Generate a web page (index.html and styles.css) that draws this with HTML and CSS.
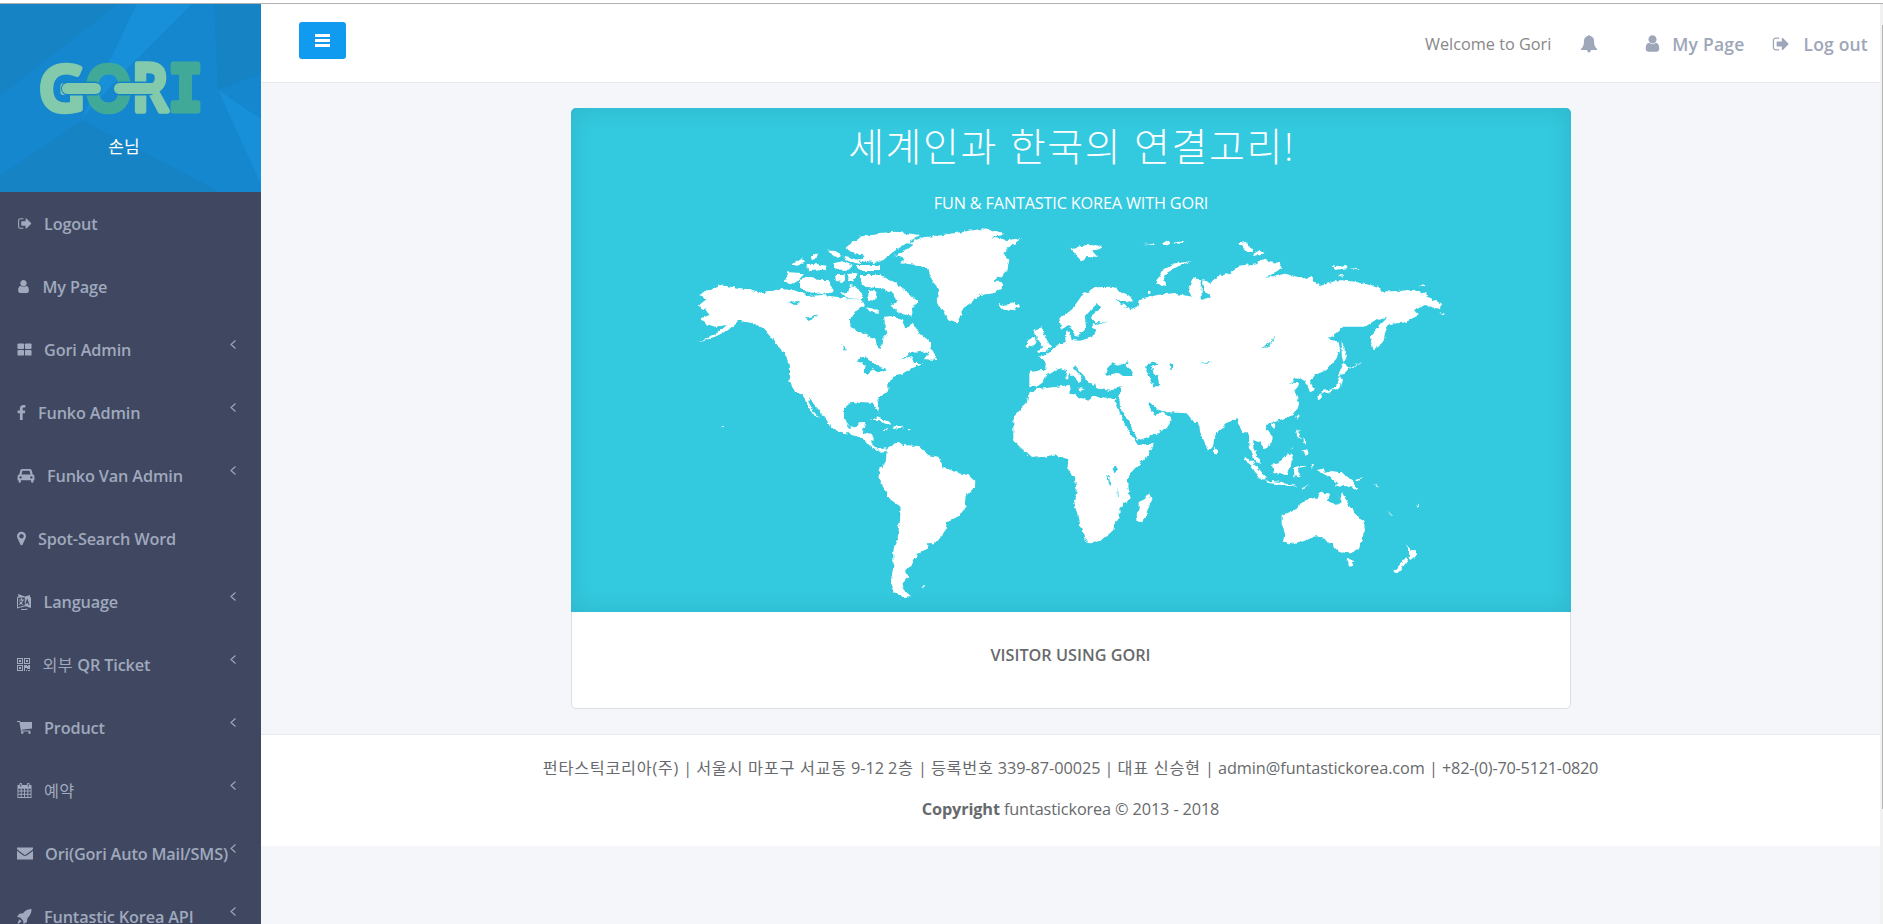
FILE: index.html
```html
<!DOCTYPE html>
<html lang="ko">
<head>
<meta charset="utf-8">
<title>GORI</title>
<link rel="stylesheet" href="styles.css">
</head>
<body>
<svg class="defs" width="0" height="0">
  <symbol id="signout" viewBox="0 0 1664 1792"><path d="M704 1440q0 4 1 20t.5 26.500-3 23.500-10 19.500-20.500 6.500h-320q-119 0-203.500-84.500t-84.500-203.500v-704q0-119 84.500-203.500t203.500-84.500h320q13 0 22.500 9.500t9.500 22.500q0 4 1 20t.5 26.500-3 23.500-10 19.500-20.500 6.500h-320q-66 0-113 47t-47 113v704q0 66 47 113t113 47h312l23 4 15 14 2 14zM1632 896q0 26-19 45l-544 544q-19 19-45 19t-45-19-19-45v-288h-448q-26 0-45-19t-19-45v-384q0-26 19-45t45-19h448v-288q0-26 19-45t45-19 45 19l544 544q19 19 19 45z"/></symbol>
  <symbol id="user" viewBox="256 0 1280 1792"><path d="M1536 1399q0 109-62.500 187t-150.500 78h-854q-88 0-150.500-78t-62.500-187q0-85 8.500-160.500t31.500-152 58.500-131 94-89 134.500-34.500q131 128 313 128t313-128q76 0 134.500 34.500t94 89 58.500 131 31.500 152 8.500 160.500zM1280 512q0 159-112.500 271.500t-271.500 112.500-271.500-112.500-112.500-271.500 112.500-271.500 271.500-112.500 271.500 112.500 112.500 271.500z"/></symbol>
  <symbol id="large" viewBox="0 0 15 16"><rect x="0" y="1.500" width="7" height="6" rx="1"/><rect x="8" y="1.500" width="7" height="6" rx="1"/><rect x="0" y="8.500" width="7" height="6" rx="1"/><rect x="8" y="8.500" width="7" height="6" rx="1"/></symbol>
  <symbol id="facebook" viewBox="479 0 864 1664"><path d="M1343 12v264h-157q-86 0-116 36t-30 108v189h293l-39 296h-254v759h-306v-759h-255v-296h255v-218q0-186 104-288.500t277-102.500q147 0 228 12z"/></symbol>
  <symbol id="car" viewBox="0 0 18 16"><path fill-rule="evenodd" d="M5 1h8q1.500 0 2 1.500L16.200 7Q18 7.200 18 9v4h-1v1.300q0 1.500-1.300 1.500T14.400 14.300V13H3.600v1.300q0 1.500-1.300 1.500T1 14.300V13H0V9q0-1.800 1.800-2L3 2.500Q3.500 1 5 1zM5.200 3 4.200 7h9.600l-1-4zM3.300 8.700a1.300 1.300 0 1 0 .01 0zM14.700 8.700a1.300 1.300 0 1 0 .01 0z"/></symbol>
  <symbol id="marker" viewBox="384 128 1024 1536"><path fill-rule="evenodd" d="M1152 640q0-106-75-181t-181-75-181 75-75 181 75 181 181 75 181-75 75-181zM1408 640q0 109-33 179l-364 774q-16 33-47.500 52t-67.500 19-67.500-19-46.500-52l-365-774q-33-70-33-179 0-212 150-362t362-150 362 150 150 362z"/></symbol>
  <symbol id="language" viewBox="0 0 14 16"><path fill-rule="evenodd" d="M1 0l7 2.500L13 1v2l1 .5V14l-5.500-1.700L0 14.500V3l1.500-.5zM1 3.800v9.400l6.800-2V3.500zM4 4h1v1.500h2v1H6q-.3 1.600-1.200 2.700l1.400 1-.6.8-1.600-1.100-1.800 1.100-.6-.8 1.600-1q-.8-.9-1-1.800h1l.8 1.100q.6-.8.8-2H1.700v-1H4zM10.500 5l2 6-1-.3-.4-1.300-1.500-.4-.4 1.200-.8-.3 1.500-5zM4 15h5l1-1 .5 1.500-1.500.5H4z"/></symbol>
  <symbol id="qr" viewBox="0 0 13 13"><path fill-rule="evenodd" d="M0 0h6v6H0zM1 1v4h4V1zM2 2h2v2H2zM7 0h6v6H7zM8 1v4h4V1zM9 2h2v2H9zM0 7h6v6H0zM1 8v4h4V8zM2 9h2v2H2zM7 7h3v1h1V7h2v4h-3v-1H8v3H7zM9 12h1v1H9zM11 12h2v1h-2z"/></symbol>
  <symbol id="cart" viewBox="0 0 15 13"><path d="M0 0h3l.5 1H15v6.500L4.700 8.700 5 9.500h8.500v1H4L2.400 1H0zM5.300 10.500a1.200 1.200 0 1 1-.01 0zM12.500 10.500a1.200 1.200 0 1 1-.01 0z"/></symbol>
  <symbol id="calendar" viewBox="0 0 15 16"><path fill-rule="evenodd" d="M0 2h2V1q0-1 1.500-1T5 1v1h5V1q0-1 1.500-1T13 1v1h2v14H0zM1 6v2h2.500V6zM4.500 6v2H7V6zM8 6v2h2.500V6zM11.500 6v2H14V6zM1 9v2.500h2.500V9zM4.500 9v2.500H7V9zM8 9v2.500h2.500V9zM11.500 9v2.500H14V9zM1 12.500V15h2.500v-2.500zM4.500 12.500V15H7v-2.500zM8 12.500V15h2.500v-2.500zM11.500 12.500V15H14v-2.500zM3 1v3h1V1zM11 1v3h1V1z"/></symbol>
  <symbol id="mail" viewBox="0 0 16 12"><path d="M0 0h16v1.500Q15 3 8 7.700 1 3 0 1.500zM0 3.300Q3 5.800 6 7.800q2 1.300 4 0 3-2 6-4.500V12H0z"/></symbol>
  <symbol id="rocket" viewBox="0 0 16 16"><path d="M15.500 0Q15.500 6 11 10l-.5 4-3.500 2-.5-3.500L3.500 9 0 8.500 2.500 5l4-.5Q10 0 15.500 0zM2.500 11l2.500 2-3 2.500H.5z"/></symbol>
  <symbol id="bell" viewBox="0 0 16 18"><path d="M7 1a1 1 0 0 1 2 0q4 .8 4 5 0 5.500 3 8v1H10a2 2 0 0 1-4 0H0v-1q3-2.500 3-8 0-4.200 4-5zM6 15.500h4L8 18z"/></symbol>
  <symbol id="left" viewBox="0 0 6 9"><path d="M5.500.5 1 4.500l4.500 4" fill="none" stroke="currentColor" stroke-width="1.100"/></symbol>
</svg>

<div class="page">
  <aside class="sidebar">
    <div class="profile">
      <svg class="facets" viewBox="0 0 261 188" preserveAspectRatio="none">
        <path fill="#1683c4" d="M0 0h118L0 92zM82 116 220 188H0v-16zM214 0h47v70l-43 16z"/>
        <path fill="#1890d9" d="M137 0h55L126 66 82 114zM218 86l43 29v65z"/>
      </svg>
      <svg class="logo" viewBox="38 59 166 58" role="img" aria-label="GORI">
        <g font-family="Open Sans" font-weight="600" stroke-linejoin="round">
          <text x="39" y="111" font-size="64" textLength="46" lengthAdjust="spacingAndGlyphs" fill="#82caab" stroke="#82caab" stroke-width="5.500">G</text>
          <text x="85" y="111" font-size="64" textLength="47" lengthAdjust="spacingAndGlyphs" fill="#40a998" stroke="#40a998" stroke-width="5.500">O</text>
          <text x="132" y="111" font-size="65" textLength="36" lengthAdjust="spacingAndGlyphs" fill="#82caab" stroke="#82caab" stroke-width="5.500">R</text>
          <text x="168" y="111" font-size="64" textLength="35" lengthAdjust="spacingAndGlyphs" font-family="DejaVu Sans Mono" font-weight="700" fill="#40a998" stroke="#40a998" stroke-width="5">I</text>
        </g>
        <rect x="61" y="81.500" width="41" height="14" rx="7" fill="#1585ca"/>
        <rect x="62" y="83" width="39" height="11" rx="5.500" fill="#82caab"/>
        <rect x="113" y="81.500" width="43" height="14" rx="7" fill="#1585ca"/>
        <rect x="114" y="83" width="46" height="11" rx="5.500" fill="#82caab"/>
      </svg>
      <div class="guest">손님</div>
    </div>
    <nav class="menu">
      <a><svg class="i15"><use href="#signout"/></svg><span>Logout</span></a>
      <a><svg class="i13"><use href="#user"/></svg><span>My Page</span></a>
      <a><svg class="i15"><use href="#large"/></svg><span>Gori Admin</span><svg class="arrow"><use href="#left"/></svg></a>
      <a><svg class="i9"><use href="#facebook"/></svg><span>Funko Admin</span><svg class="arrow"><use href="#left"/></svg></a>
      <a><svg class="i18"><use href="#car"/></svg><span>Funko Van Admin</span><svg class="arrow"><use href="#left"/></svg></a>
      <a><svg class="i9"><use href="#marker"/></svg><span>Spot-Search Word</span></a>
      <a><svg class="i14"><use href="#language"/></svg><span>Language</span><svg class="arrow"><use href="#left"/></svg></a>
      <a><svg class="i13 low"><use href="#qr"/></svg><span><span class="ko">외부</span> QR Ticket</span><svg class="arrow"><use href="#left"/></svg></a>
      <a><svg class="i15 low"><use href="#cart"/></svg><span>Product</span><svg class="arrow"><use href="#left"/></svg></a>
      <a><svg class="i15"><use href="#calendar"/></svg><span class="ko">예약</span><svg class="arrow"><use href="#left"/></svg></a>
      <a><svg class="i16 low"><use href="#mail"/></svg><span class="long">Ori(Gori Auto Mail/SMS)</span><svg class="arrow"><use href="#left"/></svg></a>
      <a><svg class="i15"><use href="#rocket"/></svg><span>Funtastic Korea API</span><svg class="arrow"><use href="#left"/></svg></a>
    </nav>
  </aside>

  <main class="content">
    <header class="topbar">
      <button class="toggle" aria-label="menu"><svg viewBox="0 0 15 13"><path d="M0 0h15v3H0zM0 5h15v3H0zM0 10h15v3H0z"/></svg></button>
      <div class="links">
        <span class="welcome">Welcome to Gori</span>
        <svg class="bell"><use href="#bell"/></svg>
        <svg class="me"><use href="#user"/></svg><span class="mypage">My Page</span>
        <svg class="out"><use href="#signout"/></svg><span class="logout">Log out</span>
      </div>
    </header>

    <section class="card">
      <div class="hero">
        <h1>세계인과 한국의 연결고리!</h1>
        <p>FUN &amp; FANTASTIC KOREA WITH GORI</p>
        <svg class="map" viewBox="571 220 1000 391">
          <defs><filter id="coast" x="0" y="0" width="1" height="1" color-interpolation-filters="sRGB"><feTurbulence type="fractalNoise" baseFrequency=".22" numOctaves="2" seed="4"/><feDisplacementMap in="SourceGraphic" scale="4.500" xChannelSelector="R" yChannelSelector="G"/></filter></defs>
          <g fill="#fff" filter="url(#coast)">
            <rect x="571" y="220" width="1000" height="391" fill="none"/>
            <!-- North America, Greenland, Iceland, Britain -->
            <g transform="translate(560 100) scale(.33333)">
              <path d="M418 585L445 570 480 555 520 562 570 568 610 580 660 566 710 572 745 588 790 585 860 595 900 600 915 615 890 632 870 660 872 685 905 700 945 715 952 740 962 747 968 715 982 700 975 675 972 650 1000 648 1025 660 1035 682 1050 680 1058 668 1075 695 1110 725 1112 745 1132 780 1095 778 1108 755 1085 755 1050 760 1020 780 1055 768 1062 788 1090 790 1050 808 1020 825 1000 830 985 850 985 870 952 900 960 938 945 925 940 908 900 906 870 910 852 925 852 960 870 983 890 980 897 967 916 966 908 1000 938 1005 937 1035 955 1048 975 1045 980 1053 960 1055 930 1038 915 1020 890 1012 870 1000 850 1000 810 980 800 960 775 928 748 896 745 905 762 935 777 953 760 945 745 920 728 885 705 875 688 840 686 780 660 745 635 715 610 685 580 670 535 662 505 690 470 708 415 730 465 700 490 685 500 675 465 680 440 672 425 655 448 645 440 630 415 618 430 605 440 598z"/>
              <path d="M1005 465L1040 450 1060 435 1040 430 1090 412 1150 405 1210 395 1260 387 1310 392 1330 405 1290 412 1340 420 1385 415 1350 440 1330 460 1348 480 1342 510 1320 530 1300 545 1328 545 1325 565 1300 580 1260 585 1230 610 1210 625 1192 668 1165 658 1145 630 1130 600 1138 570 1115 540 1100 505 1075 495 1020 490 1035 478z"/>
              <path d="M1315 608l15 7 20-3 15-7 13 15-33 15-20-7zM860 440l25-18 15-12 50-10 60-5 70 10-40 25-40 25-30 25-30 10-40-8 15-15-30-5-20-10zM885 495l75 0 0 18-60 0zM685 517l50 3-25 25-20 8-15-8zM720 540l30-10 25 10 25 0 25 35-35 8-50-8-20-15zM900 525l60 0 40 20 40 30 35 30-20 15 3 27-30-4-43-21 25-17-10-25-40-15-45-5-15-15zM695 495l25-18 18 5-25 15zM740 492l25 0 35 5-5 12-50 5zM750 470l25-10-5 16-18 4zM800 452l20 0 25 15-12 6zM820 490l30-8 28 12-15 15-35 0zM825 525l30 0-5 22-22-4zM865 522l28-2-14 25-14-4zM870 555l20 5 20 30-10 10-30-5-30-15 25-5zM925 570l25 5-5 28-20-3zM918 620l35 10 0 12-25-8zM850 470l50 10 0 12-40-10z"/>
              <path d="M1422 688l25-6 5 20 10 20 12 20-18 14-26-1 18-15-15-20zM1405 720l20-10 2 20-22 15-8-10zM1535 445l25 0 0 20-15 0zM485 976l5-1 1 6-5 1z"/>
              <g fill="#33c9df"><path d="M685 605l38-2-15 15zM735 655l42-14-30 22zM890 782l25-14 22 18 14 12 30 10-24 8-20-12-12 20-12-3 4-26zM842 726l15 22-2 6zM965 585l25-5 15 20-22 12 30 20-45 0 5-20z"/></g>
            </g>
            <!-- South America and Africa -->
            <g transform="translate(680 380) scale(.33333)">
              <path d="M620 205L655 185 670 195 715 198 745 225 775 230 790 260 830 278 865 285 886 305 885 320 860 345 857 380 840 408 800 425 797 450 765 490 740 490 745 505 710 522 708 535 695 540 698 550 678 572 688 588 668 610 672 630 692 648 670 652 640 635 633 600 640 560 640 510 652 480 660 420 662 380 630 358 595 295 600 268 618 240z"/>
              <path d="M1070 28L1170 15 1172 40 1225 62 1240 48 1310 58 1303 66 1330 120 1350 160 1370 190 1385 195 1420 188 1405 225 1345 285 1342 320 1352 355 1318 385 1320 415 1303 430 1300 450 1265 482 1220 488 1215 470 1197 435 1192 400 1180 370 1190 335 1185 295 1162 268 1165 238 1140 230 1130 222 1095 230 1055 233 1030 210 1000 182 1000 120 1012 95 1040 70 1045 45z"/>
              <path d="M572 120l20-8 30 12 15 10-20-2-20-12zM640 142l12-8 20 8-18 5zM612 145l12 2-2 4-10-2zM683 144l8 0 0 4-8 0zM720 622l16-4-4 7z"/>
              <g fill="#33c9df"><path d="M1298 265l10-6 6 10-12 8zM1282 285l5 5 4 24-4-2zM1312 322l5 28-3 0z"/></g>
            </g>
            <!-- Eurasia -->
            <g transform="translate(1060 100) scale(.33333)">
              <path d="M-92 858L-92 812-45 810-42 785-62 770-40 765-15 740 0 730 20 727 18 700 25 690 32 720 60 722 95 712 110 690 95 685 100 672 145 668 100 665 95 645 125 625 110 612 92 630 75 650 78 680 62 700 48 710 35 680 22 675 5 690-2 655 35 630 70 580 110 562 155 560 215 590 218 605 165 600 210 628 235 620 240 600 290 585 340 580 395 590 385 570 405 530 425 545 425 600 455 590 430 570 430 540 450 550 470 530 510 520 540 497 590 490 605 478 660 490 665 505 615 535 670 520 730 535 755 530 760 545 780 558 835 540 885 545 955 560 965 575 1060 570 1095 580 1120 600 1145 610 1140 628 1095 615 1065 630 1078 645 1030 668 985 672 975 700 970 725 940 750 930 710 960 675 985 650 950 658 915 680 850 680 805 718 835 725 840 750 830 775 800 810 765 825 750 845 765 870 750 877 738 845 715 832 690 848 720 850 703 870 718 910 700 945 665 958 640 968 630 965 617 980 638 1010 635 1030 612 1047 600 1028 580 1020 580 1045 605 1092 585 1085 570 1045 565 1000 550 1000 530 958 505 965 463 1005 460 1035 445 1052 420 995 417 965 405 970 380 940 320 937 285 925 270 905 262 912 285 945 310 935 335 960 320 985 280 1005 232 1022 225 1000 180 922 178 890 185 860 150 872 110 865 105 850 100 858 80 840 45 795 42 805 68 835 60 850 20 810 0 805-15 812-45 830-55 850-72 862z"/>
              <path d="M30 445l50-10 50 2-20 12-15 2 18 20-30-3-18 15-15-15zM248 432l35-2 0 5zM305 434l20-12 8 8-10 6zM338 428l36-4-10 8zM538 430l20-5 5 15 17 8-5 10-25-10zM580 462l20-12 14 10-30 8zM290 545l20-35 35-20 50-6-40 15-35 20-10 22 10 18-28-8zM815 500l40-5 8 10-40 5zM870 505l30 3-12 3zM832 524l22 2-8 4zM1078 555l20-3-8 7zM1138 637l16 3-8 4zM264 575l10 0 0 6-10 0zM845 722l8 20 6 38-10 5-4-20zM850 788l20 15-20 20-15 2zM838 825l8 15-8 25-25 8-35 12 8-12 30-5 18-15zM772 888l10-4 0 14-8 2zM870 803l38-18-34 22z"/>
              <path d="M20 812l5 0 0 26-8 0 0-12zM55 865l20 3-16 4z"/>
              <g fill="#33c9df"><path d="M140 828l-4-10 18-32 28 10 22-12-4 14 20 18 0 12-25 0-26-10zM255 800l25-15 16 5-20 12 5 20 12 5 5 32-18 0-10-25zM328 792l12 2 0 10-8 4zM607 745l28-20 6-16 0 14-16 18zM424 794l8-8 26 2-24 2z"/></g>
            </g>
            <!-- Oceania and the southern islands -->
            <g transform="translate(1120 380) scale(.33333)">
              <path d="M485 405L535 385 540 372 570 352 590 358 600 338 630 340 622 358 652 378 660 370 665 335 690 382 732 428 735 450 715 510 690 520 670 518 648 508 638 488 625 490 612 474 590 468 550 484 505 493 492 487 496 465 485 430zM680 537l22 2-6 15-8 3z"/>
              <path d="M87 340l7 15-18 60-10 12-14-5-2-20 6-16 0-20 18-8zM282 200l10 10-2 14-8-4zM370 230l25 12 40 45 2 12-20-5-30-40zM438 302l50 4 45 14-40-4-52-8zM456 255l20-5 30-30 12 10-5 20-12 35-25-3-15-8zM522 262l32-8 0 6-22 4 10 26-8 2-6-12-5 14zM545 325l22-10-15 12zM590 270l20-4 5 12 20-5 35 5 25 20 20 30-28-8-15-2-8 3-20-5 8-5-20-20-25-10zM705 300l24-6-18 10zM742 298l10 6M760 308l20 16-8-4zM530 148l8 0 0 20 10 12-12-5-10-15zM550 175l8 10 0 10-6-8zM548 212l12-6 6 14-10 4zM526 110l9-8 0 12-4 8zM457 132l10 0-5 14-6-6zM510 208l12-12-8 12zM572 252l6 0-2 20zM805 395l14 12-4 0zM888 378l14-10-8 12z"/>
              <path d="M858 492l15 18 18 5-8 15-12 10-4-5 4-12zM862 535l-5 15-15 20-10 10-15-5 20-15 15-22z"/>
            </g>
          </g>
        </svg>
      </div>
      <div class="caption">VISITOR USING GORI</div>
    </section>

    <footer class="footer">
      <p class="company"><span class="wide">펀타스틱코리아(주)</span> | <span class="wide">서울시 마포구 서교동</span> 9-12 <span class="wide">2층</span> | <span class="wide">등록번호</span> 339-87-00025 | <span class="wide">대표 신승현</span> | admin@funtastickorea.com | <span class="phone">+82-(0)-70-5121-0820</span></p>
      <p class="copy"><b>Copyright</b> funtastickorea © 2013 - 2018</p>
    </footer>
  </main>
  <div class="scroll"><i></i></div>
</div>
</body>
</html>
```
FILE: styles.css
```css
* { box-sizing: border-box; }
html, body { height: 100%; }
body { margin: 0; overflow: hidden; background: #fff; font: 16.25px/24px "Open Sans", "Noto Sans CJK KR", sans-serif; color: #676a6c; }
.defs { display: block; height: 0; }
.page { display: flex; height: 921px; margin-top: 3px; border-top: 1px solid #b0b0b0; background: #f4f6fa; }
svg { fill: currentColor; }

.sidebar { width: 261px; flex: none; overflow: hidden; background: #3f4860; }
.profile { position: relative; height: 188px; padding-top: 55px; background: #1587ce; color: #fff; text-align: center; }
.facets { position: absolute; inset: 0; width: 100%; height: 100%; }
.logo { position: relative; display: block; width: 166px; height: 58px; margin-left: 38px; overflow: visible; }
.guest { position: relative; width: 248px; margin-top: 18px; font-size: 17px; }
.menu a { display: flex; align-items: center; height: 63px; padding-left: 17px; color: #a0a9bd; font-weight: 600; letter-spacing: -.15px; white-space: nowrap; }
.menu svg { flex: none; height: 15px; margin-right: 12px; }
.menu .i9 { width: 9px; }
.menu .i13 { width: 13px; margin-right: 12.5px; }
.menu .i14 { width: 14px; height: 16px; margin-right: 12.5px; }
.menu .i15 { width: 15px; }
.menu .i16 { width: 16px; }
.menu .i18 { width: 18px; }
.menu .low { height: 13px; }
.menu .arrow { width: 6px; height: 9px; margin: 0 25px 10px auto; }
.menu .long { margin-right: -10px; }
.ko { font-weight: 400; letter-spacing: .4px; }

.content { flex: 1; min-width: 0; }
.topbar { display: flex; justify-content: space-between; height: 79px; padding: 18px 12px 0 38px; background: #fff; border-bottom: 1px solid #e7eaec; }
.toggle { width: 47px; height: 37px; padding: 0; border: 0; border-radius: 3px; background: #119bf0; color: #fff; line-height: 0; }
.toggle svg { width: 15px; height: 13px; }
.links { display: flex; align-items: center; height: 43px; font-size: 17.5px; font-weight: 600; letter-spacing: .2px; color: #9ea6b9; }
.welcome { font-size: 16.25px; font-weight: 400; letter-spacing: 0; color: #888; }
.bell { width: 16px; height: 18px; margin: 0 48px 0 30px; }
.me { width: 15px; height: 19px; margin-right: 12px; }
.out { width: 17px; height: 18px; margin: 0 14px 0 28px; }

.card { width: 1000px; height: 601px; margin: 25px auto 0; border: 1px solid #dcdee0; border-radius: 5px; background: #fff; }
.hero { width: 1000px; height: 504px; margin: -1px; padding-top: 15px; border-radius: 5px 5px 0 0; overflow: hidden; background: #33c9df; box-shadow: inset 0 0 25px rgba(0, 0, 0, .1); text-align: center; color: #fff; }
.hero h1 { height: 48px; margin: 0; padding-left: 2px; font: 300 39px/46px "Open Sans", "Noto Sans CJK KR", sans-serif; letter-spacing: 1.6px; }
.hero p { margin: 20px 0 0; padding-left: 1px; letter-spacing: -.17px; }
.map { display: block; width: 1000px; height: 391px; margin-top: 5px; }
.caption { padding-top: 32px; text-align: center; font-weight: 600; }

.footer { height: 112px; margin-top: 25px; padding-top: 21px; border-top: 1px solid #e7eaec; background: #fff; text-align: center; }
.footer p { margin: 0 0 17px; white-space: nowrap; }
.company { letter-spacing: -.06px; }
.wide { letter-spacing: .7px; }
.phone { letter-spacing: -.22px; }
.copy { letter-spacing: -.12px; }

.scroll { width: 3px; flex: none; padding: 21px 0 0 2px; background: #f1f1f1; }
.scroll i { display: block; height: 784px; background: #b5b5b5; }
```
